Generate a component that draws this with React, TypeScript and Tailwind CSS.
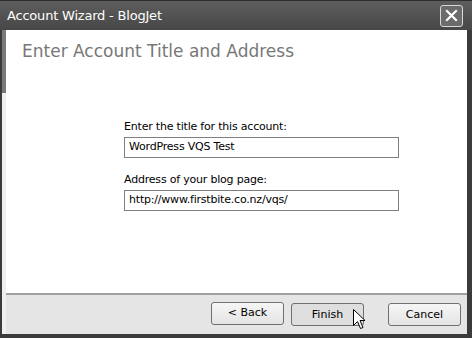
import React from 'react';

const ui = { fontFamily: '"DejaVu Sans", Verdana, sans-serif' };

const Field = ({ label, value }: { label: string; value: string }) => (
  <div className="flex flex-col">
    <span className="text-[11px] leading-[13px] tracking-[-0.2px] text-black">{label}</span>
    <div className="mt-[4px] h-[21px] w-[275px] border border-[#7f7f7f] bg-white px-[4px] flex items-center text-[11px] tracking-[-0.2px] text-black">
      {value}
    </div>
  </div>
);

const WizardButton = ({ label, hover }: { label: string; hover?: boolean }) => (
  <button
    className={
      'h-[23px] w-[73px] rounded-[3px] border border-[#707070] text-[11px] text-black ' +
      (hover ? 'bg-[#dedede]' : 'bg-gradient-to-b from-[#f6f6f6] to-[#e4e4e4]')
    }
  >
    {label}
  </button>
);

const Cursor = () => (
  <svg className="absolute left-[353px] top-[309px]" width="13" height="21" viewBox="0 0 13 21">
    <path
      d="M0.5 0.5 L0.5 16.5 L4.5 12.5 L7.5 19.5 L10 18.5 L7 11.5 L12 11.5 Z"
      fill="white"
      stroke="black"
      strokeWidth="1"
      strokeLinejoin="miter"
    />
  </svg>
);

export default function App() {
  return (
    <div className="relative w-[472px] h-[338px] bg-[#3b3b3b] flex flex-col overflow-hidden" style={ui}>
      {/* title bar */}
      <div className="h-[30px] flex items-center justify-between pl-[7px] pr-[9px] bg-gradient-to-b from-[#5e5e5e] to-[#474747] border-t border-[#2e2e2e]">
        <span className="text-[13px] tracking-[-0.2px] text-white">Account Wizard - BlogJet</span>
        <div className="w-[23px] h-[22px] rounded-[3px] border border-[#d8d8d8] bg-[#6b6b6b] flex items-center justify-center">
          <svg width="13" height="13" viewBox="0 0 13 13">
            <path d="M2 2 L11 11 M11 2 L2 11" stroke="white" strokeWidth="2.2" strokeLinecap="square" />
          </svg>
        </div>
      </div>

      <div className="flex-1 flex ml-[2px] mr-[5px] mb-[4px]">
        <div className="w-[4px] flex flex-col">
          <div className="h-[63px] bg-[#7a7a7a]" />
          <div className="flex-1 bg-[#efefef]" />
        </div>
        <div className="flex-1 flex flex-col">
          <div className="flex-1 bg-white flex flex-col">
            <h1 className="pl-[16px] pt-[10px] text-[17px] leading-[22px] text-[#777777]">
              Enter Account Title and Address
            </h1>
            <div className="pl-[118px] pt-[58px] flex flex-col gap-[15px]">
              <Field label="Enter the title for this account:" value="WordPress VQS Test" />
              <Field label="Address of your blog page:" value="http://www.firstbite.co.nz/vqs/" />
            </div>
          </div>
          <div className="h-[41px] border-t-2 border-[#a0a0a0] bg-[#e5e5e5] flex items-center justify-end pr-[6px] pb-[2px]">
            <WizardButton label="< Back" />
            <div className="ml-[7px]">
              <WizardButton label="Finish" hover />
            </div>
            <div className="ml-[24px]">
              <WizardButton label="Cancel" />
            </div>
          </div>
        </div>
      </div>
      <Cursor />
    </div>
  );
}
